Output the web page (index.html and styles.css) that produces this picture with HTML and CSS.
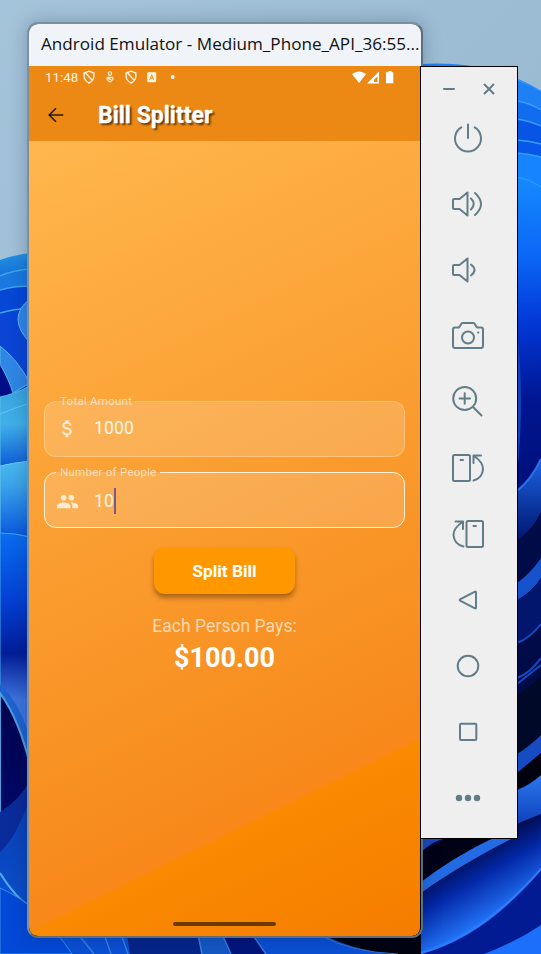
FILE: index.html
```html
<!DOCTYPE html>
<html lang="en">
<head>
<meta charset="utf-8">
<title>Bill Splitter</title>
<link rel="stylesheet" href="styles.css">
</head>
<body>
<svg class="wallpaper" viewBox="0 0 541 954" aria-hidden="true">
  <defs>
    <linearGradient id="sky" x2="0.6" y2="1"><stop offset="0" stop-color="#a4c4da"/><stop offset=".5" stop-color="#9bbbd3"/><stop offset="1" stop-color="#b5cbdb"/></linearGradient>
    <linearGradient id="l1" x2="0" y2="1"><stop offset="0" stop-color="#2391e3"/><stop offset="1" stop-color="#0a50d2"/></linearGradient>
    <linearGradient id="l2" x2="0" y2="1"><stop offset="0" stop-color="#38a3dd"/><stop offset=".45" stop-color="#3fb0e9"/><stop offset="1" stop-color="#0b55d4"/></linearGradient>
    <linearGradient id="l3" x2="0" y2="1"><stop offset="0" stop-color="#4ab9ee"/><stop offset=".3" stop-color="#3ba4ea"/><stop offset="1" stop-color="#0653dd"/></linearGradient>
    <linearGradient id="l4" gradientUnits="userSpaceOnUse" x1="0" y1="533" x2="0" y2="700"><stop offset="0" stop-color="#0a6df0"/><stop offset=".4" stop-color="#0441d4"/><stop offset=".72" stop-color="#021d98"/><stop offset="1" stop-color="#3f74dd"/></linearGradient>
    <linearGradient id="l5" x2="0" y2="1"><stop offset="0" stop-color="#01034e"/><stop offset="1" stop-color="#020c74"/></linearGradient>
    <linearGradient id="l6" x2="0" y2="1"><stop offset="0" stop-color="#0a3cb0"/><stop offset="1" stop-color="#0b57d4"/></linearGradient>
    <linearGradient id="r1" x2="0" y2="1"><stop offset="0" stop-color="#168aff"/><stop offset=".25" stop-color="#0b66f6"/><stop offset=".45" stop-color="#0238d6"/><stop offset=".7" stop-color="#001590"/><stop offset="1" stop-color="#001078"/></linearGradient>
    <linearGradient id="r2" x2="0" y2="1"><stop offset="0" stop-color="#1d63e2"/><stop offset="1" stop-color="#00166f"/></linearGradient>
    <linearGradient id="r3" gradientUnits="userSpaceOnUse" x1="450" y1="862" x2="486" y2="924"><stop offset="0" stop-color="#000a4a"/><stop offset=".4" stop-color="#0328a8"/><stop offset="1" stop-color="#2477fa"/></linearGradient>
    <linearGradient id="r4" x2="0" y2="1"><stop offset="0" stop-color="#2b77ef"/><stop offset="1" stop-color="#0c3cb5"/></linearGradient>
  </defs>
  <rect width="541" height="954" fill="url(#sky)"/>
  <path d="M0 260Q14 255 30 253V300H0Z" fill="url(#l1)"/>
  <path d="M0 276Q14 270 30 269V330H0Z" fill="#1a78e0"/>
  <path d="M0 290Q14 286 30 286V340H0Z" fill="#0647d6"/>
  <path d="M0 313Q14 309 30 308V400H0Z" fill="#0a45d6"/>
  <path d="M0 276Q14 270 30 269M0 290Q14 286 30 286M0 313Q14 309 30 308" fill="none" stroke="#3ea4ec" stroke-width="1.3"/>
  <path d="M30 299Q6 317 30 343Z" fill="#3187e8" stroke="#5cb5f3"/>
  <path d="M0 362L14 393L0 398Z" fill="#020e86"/>
  <path d="M0 346Q17 359 30 383L13 393Q9 380 0 364Z" fill="#2f86e4" stroke="#57b8ee"/>
  <path d="M0 397Q12 395 30 386V470H0Z" fill="url(#l2)" stroke="#54bfee"/>
  <path d="M0 414Q12 409 30 403" fill="none" stroke="#5cc5ee" stroke-width="1.2"/>
  <path d="M0 466Q12 463 30 461V540H0Z" fill="url(#l3)" stroke="#68caf1"/>
  <path d="M0 533Q15 533 30 537V765H0Z" fill="url(#l4)" stroke="#45a7ec"/>
  <path d="M0 684Q20 703 30 739V768L0 710Z" fill="#1f62cf"/>
  <path d="M0 693Q19 719 30 765V880H0Z" fill="url(#l5)" stroke="#4f9edd" stroke-width="2"/>
  <path d="M0 847Q20 822 30 785V954H0Z" fill="url(#l6)"/>
  <path d="M0 812Q20 800 30 780V798Q16 838 0 852Z" fill="#0a2c9a"/>
  <path d="M0 873Q15 897 30 907V937H541V954H0Z" fill="#0b4fd3"/>
  <path d="M0 873Q15 897 30 907" fill="none" stroke="#4daced" stroke-width="2"/>
  <path d="M0 888Q40 905 72 954H0Z" fill="#0349d7" stroke="#358fe8"/>
  <path d="M127 934H200L205 954H130Z" fill="#06258a"/>
  <path d="M198 934H222L229 954H201Z" fill="#1458c4"/>
  <path d="M222 934H252L266 954H231Z" fill="#02157c"/>
  <path d="M78 934L94 954M104 934L111 954M121 934L128 954M198 934L202 954M222 934L231 954M252 934L266 954" stroke="#3c80dc" stroke-width="1.4"/>
  <path d="M322 934H422V954H390Q350 949 322 934Z" fill="#01030f"/>
  <path d="M322 936Q350 952 398 954" fill="none" stroke="#3270ca"/>
  <path d="M421 64Q491 60 541 91V200H421Z" fill="#1e80f4"/>
  <path d="M517 80Q530 84 541 91" fill="none" stroke="#39a1ff"/>
  <path d="M517 101Q530 103 541 110V500H517Z" fill="#126cf0"/>
  <path d="M517 119Q530 121 541 126V500H517Z" fill="#0754e5"/>
  <path d="M517 140Q530 141 541 144V500H517Z" fill="#0757e9"/>
  <path d="M517 153Q530 154 541 157V500H517Z" fill="#1784ff"/>
  <path d="M517 101Q530 103 541 110M517 119Q530 121 541 126M517 140Q530 141 541 144M517 153Q530 154 541 157" fill="none" stroke="#379dff" stroke-width="1.3"/>
  <path d="M517 177Q530 179 541 187V500H517Z" fill="url(#r1)"/>
  <path d="M517 177Q530 179 541 187" fill="none" stroke="#349cff"/>
  <path d="M517 330Q525 400 517 474Z" fill="#1143c0"/>
  <path d="M421 836H517V490Q531 479 541 459V954H421Z" fill="#000b47"/>
  <path d="M517 491Q531 480 541 459V512Q531 532 517 540Z" fill="url(#r2)"/>
  <path d="M517 491Q531 480 541 459" fill="none" stroke="#2c70e8" stroke-width="2"/>
  <path d="M517 583Q530 574 541 558V578Q532 592 517 600Z" fill="#1752cd"/>
  <path d="M517 600Q532 592 541 578V624Q530 636 517 642Z" fill="#02166e"/>
  <path d="M517 643Q530 638 541 624M517 678Q530 673 541 658M517 684L541 665" fill="none" stroke="#174ac2" stroke-width="2"/>
  <path d="M517 696L541 677V737L517 755Z" fill="#000928"/>
  <path d="M517 754Q530 746 541 735V753Q530 764 517 773Z" fill="#174bc1"/>
  <path d="M517 773L541 753V777L517 790Z" fill="#00020d"/>
  <path d="M517 790Q530 785 541 775V817L517 829Z" fill="url(#r4)"/>
  <path d="M421 870Q475 840 541 814V954H421Z" fill="url(#r3)"/>
  <path d="M421 852Q434 840 447 838H422Z" fill="#1849bc"/>
  <path d="M421 893Q460 865 517 836H500Q450 853 421 878Z" fill="#236be4"/>
  <path d="M421 852Q435 843 449 838H493Q452 858 421 882Z" fill="#010216"/>
  <path d="M421 954Q485 937 541 870V954Z" fill="#021b93"/>
  <path d="M421 953Q484 934 541 869" fill="none" stroke="#2c7dfc" stroke-width="2"/>
  <path d="M484 954Q516 942 541 925V954Z" fill="#1b6ffa"/>
</svg>

<main class="emulator">
  <header class="titlebar">Android Emulator - Medium_Phone_API_36:55...</header>
  <section class="screen">
    <div class="top">
      <div class="status">
        <span class="clock">11:48</span>
        <svg class="notices" viewBox="0 0 100 14" fill="none" stroke="#fff3e2" stroke-width="1.4">
          <path d="M6 1.2L10.8 3V7Q10.3 11 6 13Q1.7 11 1.2 7V3ZM2.600 3L9.600 10.600"/>
          <g stroke-width="1.1"><circle cx="27" cy="3.4" r="1.7"/><path d="M24 8Q25 6.2 27 8Q29 6.2 30 8Q30.5 10 27 12Q23.5 10 24 8M25 8.5L28.6 10"/></g>
          <path d="M48 1.2L52.8 3V7Q52.3 11 48 13Q43.700 11 43.200 7V3ZM44.600 3L51.600 10.600"/>
          <rect x="64.200" y="2.200" width="9" height="10" rx="1" fill="#fff3e2" stroke="none"/>
          <path d="M66.700 9.800L68.700 4.800L70.700 9.800M67.600 8.200H69.800" stroke="#ec8915" stroke-width="1"/>
          <circle cx="89.700" cy="7" r="1.900" fill="#fff" stroke="none"/>
        </svg>
        <svg class="signals" viewBox="0 0 42 13" fill="#fff">
          <path d="M0 3Q7 -2 14 3L7 12Z"/>
          <path d="M27 .5V12.500H15Z"/><path d="M25.500 5.500V11H22V8.500Z" fill="#ec8915"/>
          <path d="M36.500 0H39.500V1.300H41.300V12.300H34V1.300H36.500Z"/>
        </svg>
      </div>
      <div class="appbar">
        <svg class="back" viewBox="0 0 16 16" fill="none" stroke="#2b1b08" stroke-width="1.6"><path d="M15.300 8H1.500M8 1.200L1.200 8L8 14.800"/></svg>
        <h1>Bill Splitter</h1>
      </div>
    </div>
    <div class="content">
      <fieldset class="field">
        <legend>Total Amount</legend>
        <svg class="lead" viewBox="0 0 24 24"><path d="M11.800 10.900c-2.270-.59-3-1.200-3-2.150 0-1.090 1.010-1.850 2.700-1.850 1.780 0 2.440.85 2.500 2.100h2.210c-.07-1.720-1.120-3.300-3.210-3.810V3h-3v2.160c-1.940.42-3.500 1.680-3.500 3.610 0 2.310 1.910 3.460 4.700 4.130 2.500.6 3 1.480 3 2.410 0 .69-.49 1.790-2.700 1.790-2.060 0-2.870-.92-2.980-2.100h-2.200c.12 2.190 1.760 3.420 3.680 3.830V21h3v-2.150c1.950-.37 3.500-1.500 3.500-3.550 0-2.840-2.430-3.810-4.700-4.400z"/></svg>
        <span class="value">1000</span>
      </fieldset>
      <fieldset class="field focused">
        <legend>Number of People</legend>
        <svg class="lead" viewBox="0 0 24 24"><path d="M16 11c1.660 0 2.990-1.340 2.990-3S17.660 5 16 5s-3 1.340-3 3 1.340 3 3 3zm-8 0c1.660 0 2.990-1.340 2.990-3S9.660 5 8 5 5 6.340 5 8s1.340 3 3 3zm0 2c-2.330 0-7 1.170-7 3.500V19h14v-2.500c0-2.330-4.670-3.500-7-3.500zm8 0c-.29 0-.62.02-.97.05 1.160.84 1.970 1.970 1.970 3.450V19h6v-2.500c0-2.330-4.670-3.500-7-3.500z"/></svg>
        <span class="value">10</span><i class="caret"></i>
      </fieldset>
      <button class="split">Split Bill</button>
      <p class="label">Each Person Pays:</p>
      <p class="amount">$100.00</p>
      <i class="handle"></i>
    </div>
  </section>
</main>

<aside class="toolbar">
  <div class="winctl">
    <svg viewBox="0 0 12 12"><path d="M1 6H11"/></svg>
    <svg viewBox="0 0 12 12"><path d="M1.500 1.500L10.500 10.500M10.500 1.500L1.500 10.500"/></svg>
  </div>
  <svg class="tool" viewBox="0 0 36 36"><path d="M18 4.500V18M11.300 7.300A13 13 0 1 0 24.700 7.300"/></svg>
  <svg class="tool" viewBox="0 0 36 36"><path d="M4 13H9.500L17.500 6.500V29.500L9.500 23H4Q3 23 3 22V14Q3 13 4 13ZM21 12.500Q26.500 18 21 23.500M25 7Q37 18 25 29"/></svg>
  <svg class="tool" viewBox="0 0 36 36"><path d="M4 13H9.500L17.500 6.500V29.500L9.500 23H4Q3 23 3 22V14Q3 13 4 13ZM21 12.500Q28 18 21 23.500"/></svg>
  <svg class="tool" viewBox="0 0 36 36"><path d="M5 9.500H9L11.500 5.500Q12 5 13 5H23Q24 5 24.500 5.500L27 9.500H31Q33 9.500 33 11.500V28Q33 30 31 30H5Q3 30 3 28V11.500Q3 9.500 5 9.500Z"/><circle cx="18" cy="19.500" r="6"/><path d="M28 14.500H28.400"/></svg>
  <svg class="tool" viewBox="0 0 36 36"><circle cx="14.700" cy="14.500" r="11.500"/><path d="M23 23L31.500 31.500M9.500 14.500H20M14.700 9.300V19.700"/></svg>
  <svg class="tool" viewBox="0 0 36 36"><rect x="3" y="5" width="17" height="26" rx="1.500"/><path d="M10.500 10H13M31 5.500H23.500V13M24 6Q33 12 33 19Q32.500 28 23.500 30.500"/></svg>
  <svg class="tool" viewBox="0 0 36 36"><rect x="16.500" y="5" width="16.500" height="26" rx="1.500"/><path d="M23.500 10H26M5.500 5.500H13V13M12.500 6Q3.500 12 3.500 19Q4 28 13.500 30.500"/></svg>
  <svg class="tool" viewBox="0 0 36 36"><path d="M10.500 17.200L24.500 9.800Q26 9 26 10.500V25.500Q26 27 24.500 26.200L10.500 18.800Q9 18 10.500 17.200Z"/></svg>
  <svg class="tool" viewBox="0 0 36 36"><circle cx="18" cy="18" r="10.300"/></svg>
  <svg class="tool" viewBox="0 0 36 36"><rect x="10" y="9.800" width="16.300" height="16.300" rx="1"/></svg>
  <svg class="tool dots" viewBox="0 0 36 36"><circle cx="9" cy="18" r="3.200"/><circle cx="18" cy="18" r="3.200"/><circle cx="27" cy="18" r="3.200"/></svg>
</aside>
</body>
</html>
```
FILE: styles.css
```css
* { box-sizing: border-box; }
body {
  margin: 0;
  width: 541px;
  height: 954px;
  position: relative;
  overflow: hidden;
  font-family: Roboto, "Liberation Sans", sans-serif;
}
svg { display: block; flex: none; }
.wallpaper { position: absolute; inset: 0; width: 541px; height: 954px; }

.emulator {
  position: absolute;
  left: 27px;
  top: 22px;
  width: 396px;
  height: 916px;
  border: 2px solid #7c8f9f;
  border-right-color: #5f6f80;
  border-bottom-color: #666c72;
  border-radius: 11px;
  overflow: hidden;
  background: #000;
  box-shadow: 0 0 18px rgba(0, 20, 50, .25);
}
.titlebar {
  height: 42px;
  padding-left: 12px;
  background: #f0f4f8;
  color: #111;
  font: 17.130px/40px "Open Sans", "Noto Sans", sans-serif;
  white-space: nowrap;
}
.screen {
  width: 391px;
  height: 870px;
  display: flex;
  flex-direction: column;
  border-radius: 0 0 8px 8px;
  overflow: hidden;
}
.top { height: 75px; background: #ec8915; }
.status {
  height: 22px;
  padding: 0 26px 0 16px;
  display: flex;
  align-items: center;
}
.clock { width: 38px; color: #fff3e2; font-size: 13.300px; }
.notices { width: 100px; height: 14px; }
.signals { width: 42px; height: 13px; margin-left: auto; }
.appbar { height: 53px; display: flex; align-items: center; padding: 1px 0 0 19px; }
.back { width: 16px; height: 16px; }
h1 {
  margin: 0 0 0 34px;
  color: #fff;
  font-size: 23px;
  font-weight: 700;
  -webkit-text-stroke: .3px #fff;
  text-shadow: 2px 2px 2px rgba(0, 0, 0, .6);
}
.content {
  flex: 1;
  display: flex;
  flex-direction: column;
  align-items: center;
  padding: 252px 15px 10px;
  background: linear-gradient(153.750deg, #ffb74d 0%, #f78819 79.900%, #fa8a00 80.200%, #f57c00 100%);
}
.field {
  position: relative;
  width: 361px;
  height: 64px;
  margin: 0 0 7px;
  padding: 0 0 0 11px;
  border: 1px solid rgba(255, 220, 170, .5);
  border-radius: 12px;
  display: flex;
  align-items: center;
  min-width: 0;
  background: rgba(255, 255, 255, .16);
}
.field legend {
  height: 16px;
  padding: 0 3px 0 4px;
  color: rgba(255, 255, 255, .65);
  font-size: 11.500px;
  line-height: 16px;
  letter-spacing: .26px;
}
.field.focused { border-color: #fff1da; }
.lead { width: 23px; height: 23px; margin-top: 8px; fill: rgba(255, 255, 255, .75); }
.field:not(.focused) .lead, .field:not(.focused) .value { position: relative; }
.value { margin: 8px 0 0 15px; color: #fff6e8; font-size: 17.500px; line-height: 23px; letter-spacing: .2px; }
.caret { width: 2px; height: 26px; margin-top: 8px; background: #7a5790; }
.split {
  width: 141px;
  height: 47px;
  flex: none;
  margin-top: 12px;
  border: 0;
  border-radius: 11px;
  background: #ff9800;
  color: #fff;
  font: 700 17.300px Roboto, sans-serif;
  box-shadow: 0 4px 5px rgba(80, 40, 0, .45);
}
.label { margin: 21px 0 0; color: rgba(255, 255, 255, .65); font-size: 17.500px; line-height: 22px; letter-spacing: .05px; }
.amount { margin: 5px 0 0; color: #fff; font-size: 27px; font-weight: 700; line-height: 32px; }
.handle { width: 103px; height: 4px; margin-top: auto; border-radius: 2px; background: #6b3a04; }

.toolbar {
  position: absolute;
  left: 420px;
  top: 66px;
  width: 98px;
  height: 773px;
  padding-right: 2px;
  border: 1px solid #000;
  background: #efefef;
  display: flex;
  flex-direction: column;
  align-items: center;
  gap: 30px;
}
.toolbar svg { fill: none; stroke: #627d88; stroke-width: 2; stroke-linecap: round; stroke-linejoin: round; }
.winctl { height: 23px; margin-top: 16px; margin-bottom: -16px; padding-left: 1px; display: flex; gap: 28px; }
.winctl svg { width: 12px; height: 12px; }
.tool { width: 36px; height: 36px; }
.toolbar .dots { fill: #627d88; stroke: none; }
```
